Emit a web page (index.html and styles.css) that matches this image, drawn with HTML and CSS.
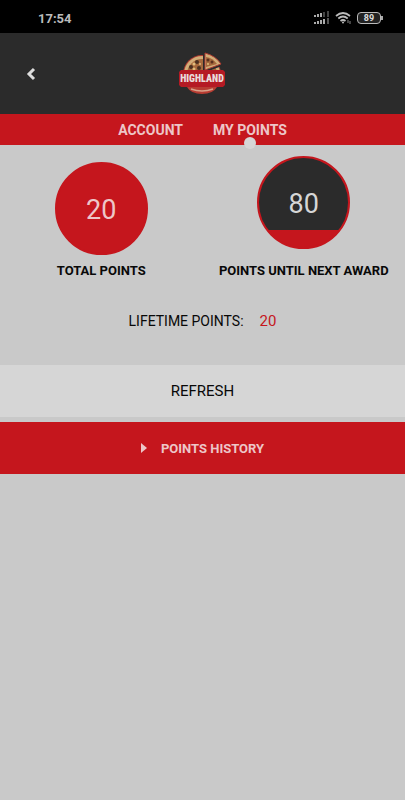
FILE: index.html
```
<!DOCTYPE html>
<html lang="en">
<head>
  <meta charset="UTF-8">
  <meta name="viewport" content="width=device-width, initial-scale=1.0">
  <title>Highland - My Points</title>
  <link rel="stylesheet" href="styles.css">
</head>
<body>
  <div class="status-bar">
    <span class="clock">17:54</span>
    <div class="status-icons">
      <svg width="16" height="14" viewBox="0 0 16 14" fill="#aaa">
        <path d="M0 4h2v2H0zM3 3h2v3H3zM6 2h2v4H6z"/>
        <path d="M9 1h2v5H9zM13 0h2v6h-2z" fill="#444"/>
        <path d="M0 11h2v2H0zM3 10h2v3H3zM6 9h2v4H6zM9 8h2v5H9z"/>
        <path d="M13 7h2v6h-2z" fill="#555"/>
      </svg>
      <svg width="17" height="14" viewBox="0 0 17 14" fill="none" stroke="#bbb" stroke-width="1.7">
        <path d="M1 5Q8 -1 15 5M3.300 7.500Q8 3.500 12.700 7.500M5.500 10Q8 8 10.500 10"/>
        <circle cx="8" cy="11.500" r="1" fill="#bbb" stroke="none"/>
        <path d="M13 9v3M15 10v3" stroke="#888" stroke-width="1"/>
      </svg>
      <div class="battery">89</div>
    </div>
  </div>

  <header class="header">
    <button type="button" class="back-btn" aria-label="Back">
      <svg width="14" height="14" viewBox="0 0 14 14">
        <path d="M10 2L5 7l5 5" fill="none" stroke="#ddd" stroke-width="3"/>
      </svg>
    </button>
    <svg class="logo" width="50" height="44" viewBox="0 0 50 44" role="img" aria-label="Highland">
      <circle cx="24" cy="22" r="19" fill="#ae3a30"/>
      <circle cx="24" cy="22" r="18" fill="#d2ad78"/>
      <circle cx="24" cy="22" r="15" fill="#a5683c"/>
      <g fill="#4b3020">
        <circle cx="13" cy="15" r="2"/><circle cx="19" cy="10" r="2"/><circle cx="21" cy="16" r="2"/>
        <circle cx="32" cy="16" r="2"/>
      </g>
      <g fill="#dfbd7c">
        <circle cx="16" cy="12" r="1.500"/><circle cx="16" cy="17" r="1.500"/><circle cx="22" cy="12" r="1"/>
      </g>
      <path d="M25 21V1l19 13z" fill="#2b2b2b"/>
      <path d="M27 18V1Q38 4 43 12z" fill="#d2ad78" stroke="#ae3a30"/>
      <path d="M28 15V5q7 1 11 7z" fill="#a5683c"/>
      <circle cx="30" cy="8" r="1.500" fill="#5b301e"/><circle cx="34" cy="10" r="1.500" fill="#5b301e"/>
      <circle cx="30" cy="12" r="1" fill="#dfbd7c"/>
      <path d="M3 18h42l2 2v13l-2 2H3l-2-2V20z" fill="#b51a24"/>
      <path d="M9 35h30q-4 7-15 7T9 35z" fill="#b83c32"/>
      <path d="M13 37q11 4 22 0" fill="none" stroke="#d8a28a" stroke-width="1.500"/>
      <text class="logo-text" x="24" y="30" text-anchor="middle">HIGHLAND</text>
    </svg>
  </header>

  <nav class="tabs">
    <a href="#account" class="tab">ACCOUNT</a>
    <a href="#points" class="tab active">MY POINTS</a>
  </nav>

  <main>
    <section class="points">
      <div class="point-item">
        <div class="circle">20</div>
        <h2 class="label">TOTAL POINTS</h2>
      </div>
      <div class="point-item">
        <div class="circle circle-next">80</div>
        <h2 class="label">POINTS UNTIL NEXT AWARD</h2>
      </div>
    </section>

    <p class="lifetime">LIFETIME POINTS: <span class="lifetime-value">20</span></p>

    <button type="button" class="refresh-btn">REFRESH</button>
    <button type="button" class="history-btn"><span class="arrow"></span>POINTS HISTORY</button>
  </main>
</body>
</html>
```
FILE: styles.css
```
* {
  margin: 0;
  padding: 0;
  box-sizing: border-box;
}

body {
  min-height: 100vh;
  background: #c9c9c9;
  color: #080808;
  font-family: Roboto, "Liberation Sans", sans-serif;
  font-size: 15px;
}

button {
  border: none;
  font-family: inherit;
  cursor: pointer;
}

/* phone status bar */
.status-bar {
  display: flex;
  justify-content: space-between;
  align-items: center;
  height: 33px;
  padding: 3px 24px 0 38px;
  background: #000;
}

.clock {
  color: #bbb;
  font-size: 13px;
  font-weight: 700;
}

.status-icons {
  display: flex;
  align-items: center;
  gap: 5px;
}

.battery {
  position: relative;
  width: 24px;
  height: 12px;
  border: 1px solid #bbb;
  border-radius: 4px;
  background: #222;
  color: #ddd;
  font-size: 9px;
  font-weight: 700;
  line-height: 10px;
  text-align: center;
}

.battery::after {
  content: '';
  position: absolute;
  top: 3px;
  right: -3px;
  width: 2px;
  height: 4px;
  background: #aaa;
}

.header {
  display: grid;
  grid-template-columns: 1fr auto 1fr;
  align-items: center;
  height: 81px;
  padding: 0 24px;
  background: #2b2b2b;
}

.back-btn {
  display: flex;
  justify-self: start;
  background: none;
}

.logo-text {
  fill: #e9dcdc;
  font-family: "Roboto Condensed", "Liberation Sans Narrow", Roboto, sans-serif;
  font-size: 10px;
  font-weight: 900;
}

.tabs {
  display: flex;
  justify-content: center;
  gap: 30px;
  background: #c5161d;
}

.tab {
  position: relative;
  height: 31px;
  color: #edc6c8;
  font-size: 14px;
  font-weight: 700;
  line-height: 32px;
  text-decoration: none;
}

.tab.active::after {
  content: '';
  position: absolute;
  bottom: -4px;
  left: 50%;
  width: 12px;
  height: 12px;
  border-radius: 50%;
  background: #d6d6d6;
  transform: translateX(-50%);
}

.points {
  display: grid;
  grid-template-columns: 1fr 1fr;
  align-items: end;
  padding-top: 11px;
}

.point-item {
  display: flex;
  flex-direction: column;
  align-items: center;
}

.circle {
  width: 93px;
  height: 93px;
  margin-bottom: 6px;
  border: 2px solid #c5161d;
  border-radius: 50%;
  background: #c5161d;
  color: #edc6c8;
  font-size: 27px;
  line-height: 92px;
  text-align: center;
}

.circle-next {
  margin-bottom: 12px;
  background: linear-gradient(#2b2b2b 81%, #c5161d 81%);
  color: #d6d6d6;
}

.label {
  font-size: 13px;
  font-weight: 700;
  line-height: 20px;
  white-space: nowrap;
}

.lifetime {
  display: flex;
  justify-content: center;
  align-items: center;
  gap: 16px;
  padding: 30px 0 34px;
  font-size: 14px;
  line-height: 20px;
}

.lifetime-value {
  color: #c5161d;
  font-size: 15px;
}

.refresh-btn,
.history-btn {
  display: flex;
  justify-content: center;
  align-items: center;
  width: 100%;
  height: 52px;
}

.refresh-btn {
  margin-bottom: 5px;
  background: #d6d6d6;
  color: #080808;
  font-size: 15px;
}

.history-btn {
  gap: 14px;
  background: #c5161d;
  color: #edc6c8;
  font-size: 13px;
  font-weight: 700;
}

.arrow {
  border: 5px solid transparent;
  border-left: 6px solid #edc6c8;
  border-right: none;
}
```
